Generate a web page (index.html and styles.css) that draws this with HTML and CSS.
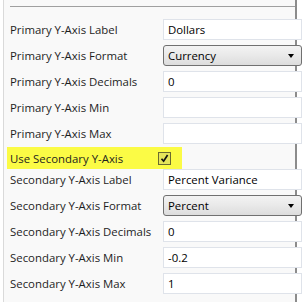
FILE: index.html
```html
<!DOCTYPE html>
<html lang="en">
<head>
    <meta charset="UTF-8">
    <meta name="viewport" content="width=device-width, initial-scale=1.0">
    <title>Chart Axis Settings</title>
    <link rel="stylesheet" href="styles.css">
</head>
<body>
    <div id="panel">
        <div id="rule"></div>
        <div id="fields">
            <div class="row">
                <label for="p-label">Primary Y-Axis Label</label>
                <input id="p-label" class="text-inp" type="text" value="Dollars">
            </div>
            <div class="row">
                <label>Primary Y-Axis Format</label>
                <div class="select">Currency<span class="arrow"></span></div>
            </div>
            <div class="row">
                <label for="p-dec">Primary Y-Axis Decimals</label>
                <input id="p-dec" class="text-inp" type="text" value="0">
            </div>
            <div class="row">
                <label for="p-min">Primary Y-Axis Min</label>
                <input id="p-min" class="text-inp" type="text" value="">
            </div>
            <div class="row">
                <label for="p-max">Primary Y-Axis Max</label>
                <input id="p-max" class="text-inp" type="text" value="">
            </div>
            <div class="row highlight">
                <label>Use Secondary Y-Axis</label>
                <span class="check">
                    <svg width="9" height="9" viewBox="0 0 9 9"><path d="M1.5 4.8 L3.6 7.2 L7.6 1" fill="none" stroke="#111" stroke-width="1.7"/></svg>
                </span>
            </div>
            <div class="row">
                <label for="s-label">Secondary Y-Axis Label</label>
                <input id="s-label" class="text-inp" type="text" value="Percent Variance">
            </div>
            <div class="row">
                <label>Secondary Y-Axis Format</label>
                <div class="select">Percent<span class="arrow"></span></div>
            </div>
            <div class="row">
                <label for="s-dec">Secondary Y-Axis Decimals</label>
                <input id="s-dec" class="text-inp" type="text" value="0">
            </div>
            <div class="row">
                <label for="s-min">Secondary Y-Axis Min</label>
                <input id="s-min" class="text-inp" type="text" value="-0.2">
            </div>
            <div class="row">
                <label for="s-max">Secondary Y-Axis Max</label>
                <input id="s-max" class="text-inp" type="text" value="1">
            </div>
        </div>
    </div>
</body>
</html>
```

FILE: styles.css
```css
/* property grid */
body {
    font-family: "Open Sans", "Noto Sans", sans-serif;
    font-size: 11.4px;
    background-color: #ffffff;
    color: #1e1e1e;
    margin: 0;
    padding: 0;
}

#panel {
    margin-left: 3px;
    width: 294px;
    height: 302px;
    background-color: #f9f9f9;
    border-left: 1px solid #dadada;
    border-right: 2px solid #8c8c8c;
    box-sizing: border-box;
    padding-top: 6px;
}

#rule {
    height: 1px;
    margin-left: 6px;
    background-color: #a0a0a0;
}

#fields {
    display: flex;
    flex-direction: column;
    gap: 5px;
    padding-top: 12px;
}

.row {
    display: grid;
    grid-template-columns: 153px 139px;
    align-items: center;
    height: 21px;
    padding-left: 6px;
}

.row label {
    white-space: nowrap;
}

.text-inp {
    box-sizing: border-box;
    width: 139px;
    height: 21px;
    margin: 0;
    padding: 0 4px;
    font: inherit;
    color: #000000;
    background: #ffffff;
    border: 1px solid #dfe3ea;
    border-radius: 0;
    outline: none;
}

.select {
    position: relative;
    box-sizing: border-box;
    width: 139px;
    height: 21px;
    padding: 1px 4px;
    line-height: 17px;
    color: #000000;
    background: linear-gradient(#f3f3f3, #e9e9e9 50%, #dcdcdc);
    border: 1px solid #707070;
    border-radius: 3px;
}

.arrow {
    position: absolute;
    right: 7px;
    top: 8px;
    border-left: 3.5px solid transparent;
    border-right: 3.5px solid transparent;
    border-top: 4px solid #000000;
}

.highlight {
    height: 22px;
    margin: -2px 0 -5px 3px;
    padding-left: 3px;
    width: 172px;
    background-color: #fbfb45;
    grid-template-columns: 148px 24px;
}

.check {
    display: flex;
    align-items: center;
    justify-content: center;
    width: 11px;
    height: 11px;
    border: 1px solid #6b6b30;
    background-color: #e4e45a;
}
```
